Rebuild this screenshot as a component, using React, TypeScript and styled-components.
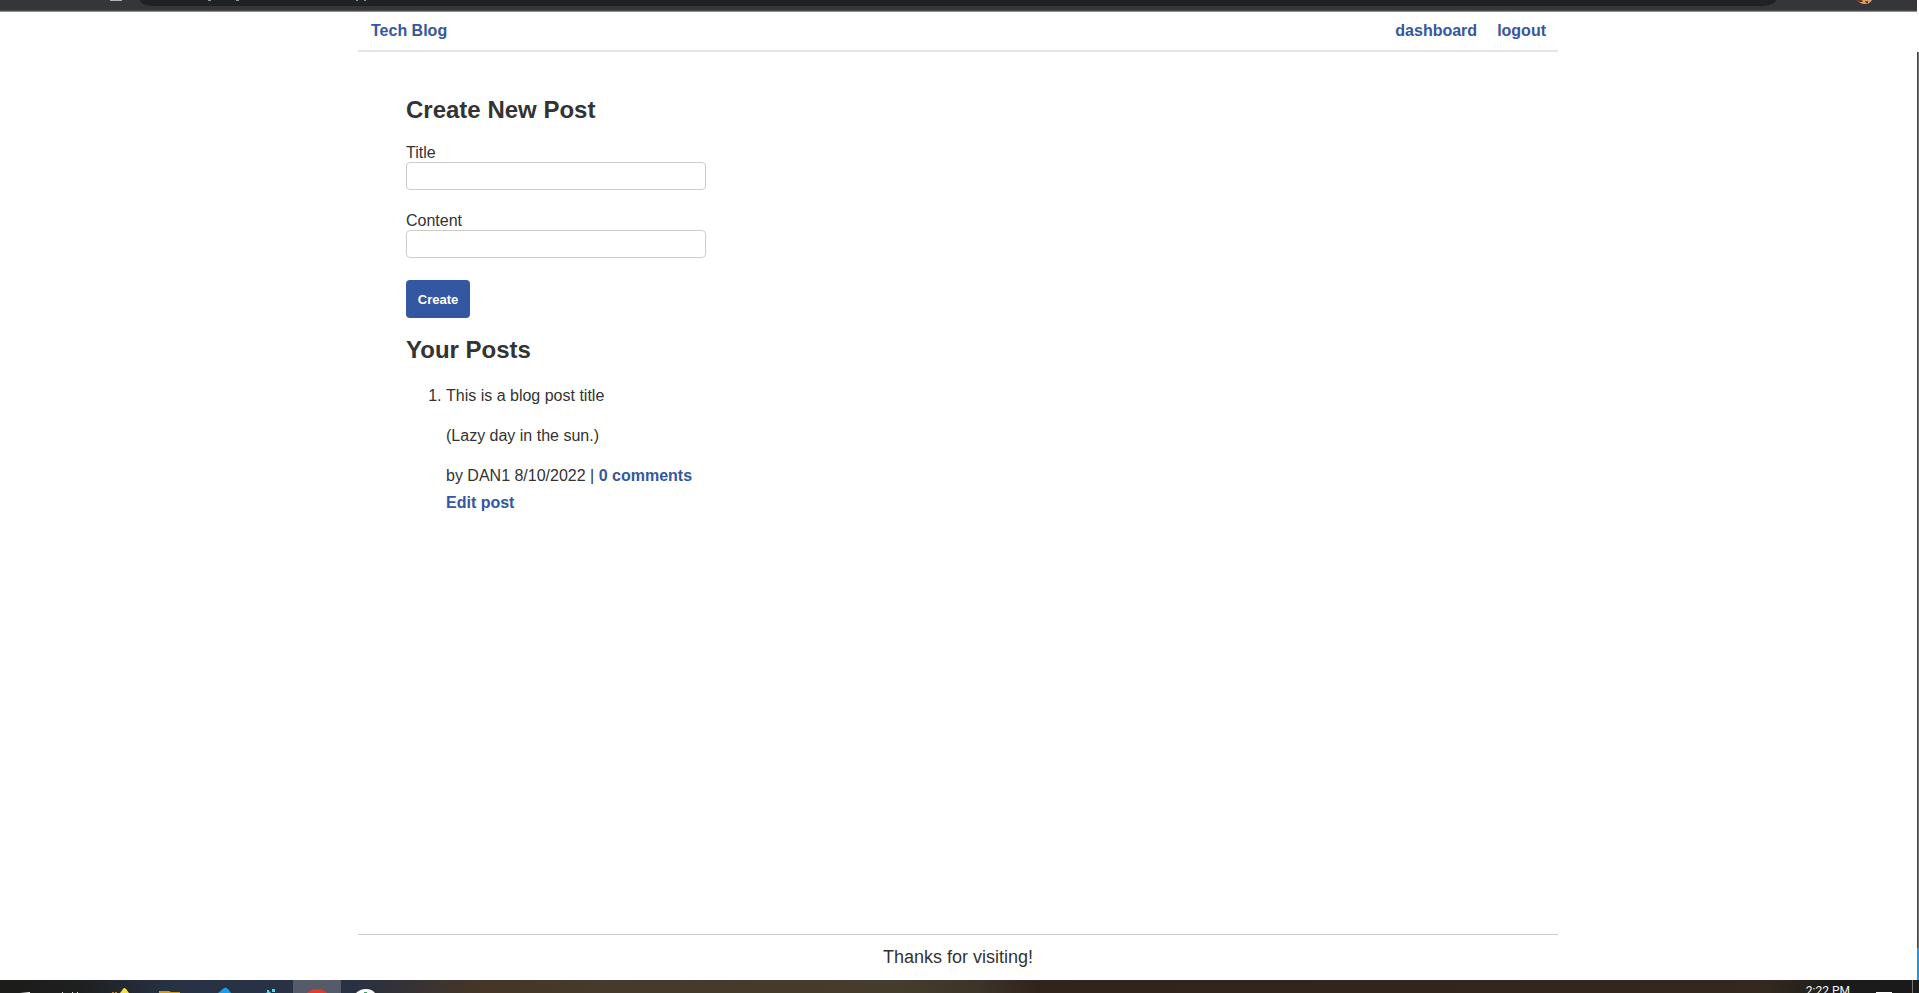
import React from 'react';
import styled, { createGlobalStyle } from 'styled-components';

const GlobalStyle = createGlobalStyle`
  * { box-sizing: border-box; }
  body {
    margin: 0;
    background: #fff;
    color: #333;
    font: 16px/18px "Liberation Sans", Arial, sans-serif;
  }
`;

const Screen = styled.div`
  display: flex;
  flex-direction: column;
  height: 100vh;
  overflow: hidden;
`;

const BrowserBar = styled.div`
  flex: none;
  height: 12px;
  padding: 0 141px 0 140px;
  margin-right: 2px;
  background: #35363a;
  border-bottom: 1px solid #8c8a8b;
  box-shadow: inset 0 -1px #4b484b;
  position: relative;
`;

const AddressBar = styled.div`
  height: 6px;
  background: #202124;
  border-radius: 0 0 14px 14px / 0 0 6px 6px;
`;

const BarDetails = styled.svg<{ $side: 'left' | 'right' }>`
  position: absolute;
  top: 0;
  ${(p) => (p.$side === 'left' ? 'left: 0;' : 'right: 0;')}
`;

const Viewport = styled.div`
  flex: 1;
  display: flex;
  min-height: 0;
`;

const Page = styled.div`
  flex: 1;
  display: flex;
  flex-direction: column;
  width: 100%;
  max-width: 1200px;
  margin: 0 auto;
`;

const ScrollEdge = styled.div`
  flex: none;
  width: 3px;
  padding: 40px 0 0 1px;
  display: flex;
  flex-direction: column;
`;

const EdgeThumb = styled.div`
  flex: 1;
  background: #777;
  border-left: 1px solid #444;
`;

const EdgeAccent = styled.div`
  height: 32px;
  background: #2196e3;
`;

const Header = styled.header`
  display: flex;
  justify-content: space-between;
  padding: 10px 12px 10px 13px;
  border-bottom: 2px solid #e4e4e4;
`;

const Nav = styled.nav`
  display: flex;
  gap: 20px;
`;

const Link = styled.a`
  color: #3457a2;
  font-weight: bold;
  text-decoration: none;
`;

const Main = styled.main`
  flex: 1;
  padding: 44px 48px 0;
`;

const Heading = styled.h2`
  margin: 0 0 20px;
  font-size: 24px;
  line-height: 28px;
`;

const Form = styled.form`
  margin-bottom: 18px;
`;

const Field = styled.div`
  display: flex;
  flex-direction: column;
  width: 300px;
  margin-bottom: 22px;
`;

const TextInput = styled.input`
  height: 28px;
  padding: 4px;
  border: 1px solid #ccc;
  border-radius: 4px;
  font: inherit;
`;

const SubmitButton = styled.button`
  display: block;
  height: 38px;
  width: 64px;
  padding: 0;
  border: 0;
  border-radius: 4px;
  background: #3457a2;
  color: #fff;
  font: bold 13px "Liberation Sans", Arial, sans-serif;
`;

const PostList = styled.ol`
  margin: 23px 0 0;
  padding-left: 40px;
`;

const PostText = styled.p`
  margin: 0 0 22px;
`;

const PostMeta = styled.div`
  margin-bottom: 9px;
`;

const Footer = styled.footer`
  padding: 11px 0;
  border-top: 1px solid #ccc;
  font-size: 18px;
  line-height: 23px;
  text-align: center;
`;

const Taskbar = styled.div`
  flex: none;
  display: flex;
  justify-content: space-between;
  height: 13px;
  overflow: hidden;
  background: linear-gradient(90deg, #1c1c1a 0, #1e1f1f 4%, #273244 9%, #273244 18%, #30313a 20%, #453626 25%, #453a2b 31%, #443c2c 47%, #3c3428 51%, #31241c 54%, #33261d 83%, #33291f 92%, #1b1b1b 96%, #1a1a1a);
`;

const Tray = styled.div`
  display: flex;
`;

const Clock = styled.span`
  margin: 2px 26px 0 0;
  color: #f2f2f2;
  font: 12px/18px Roboto, "Noto Sans", sans-serif;
`;

export default function App() {
  return (
    <Screen>
      <GlobalStyle />
      <BrowserBar>
        <AddressBar />
        <BarDetails $side="left" width="380" height="4">
          <path d="M110 0h12v1h-12z" fill="#aeb0b4" />
          <path d="M208 0h3v1h-3zM236 0h3v1h-3zM356 0h2v1h-2zM364 0h2v1h-2z" fill="#8f969a" />
        </BarDetails>
        <BarDetails $side="right" width="64" height="5">
          <path d="M4 0h15q-2 4-7 4t-8-4z" fill="#d5a468" />
          <path d="M4 0h5l1 2h-4zM12 1h3v2h-2z" fill="#7a3020" />
        </BarDetails>
      </BrowserBar>
      <Viewport>
        <Page>
          <Header>
            <Link href="#home">Tech Blog</Link>
            <Nav>
              <Link href="#dashboard">dashboard</Link>
              <Link href="#logout">logout</Link>
            </Nav>
          </Header>
          <Main>
            <Heading>Create New Post</Heading>
            <Form onSubmit={(e) => e.preventDefault()}>
              <Field>
                <label htmlFor="title">Title</label>
                <TextInput id="title" type="text" />
              </Field>
              <Field>
                <label htmlFor="content">Content</label>
                <TextInput id="content" type="text" />
              </Field>
              <SubmitButton type="submit">Create</SubmitButton>
            </Form>
            <Heading>Your Posts</Heading>
            <PostList>
              <li>
                <PostText>This is a blog post title</PostText>
                <PostText>(Lazy day in the sun.)</PostText>
                <PostMeta>
                  by DAN1 8/10/2022 | <Link href="#comments">0 comments</Link>
                </PostMeta>
                <Link href="#edit">Edit post</Link>
              </li>
            </PostList>
          </Main>
          <Footer>Thanks for visiting!</Footer>
        </Page>
        <ScrollEdge>
          <EdgeThumb />
          <EdgeAccent />
        </ScrollEdge>
      </Viewport>
      <Taskbar>
        <svg width="400" height="13" aria-hidden="true">
          <path d="M293 0h48v13h-48z" fill="#555b68" />
          <path d="M20 13l10-1v1z" fill="#fff" />
          <path d="M62 12h1v1h-1zM72 12h1v1h-1zM77 12h1v1h-1z" fill="#ddd" />
          <path d="M112 12h2v1h-2zM115 12h2v1h-2z" fill="#c78218" />
          <path d="M120 13l3-4q1-2 3 0l3 4z" fill="#f7de4b" />
          <path d="M159 11h10l2 1h9v1h-21z" fill="#d99b0c" />
          <path d="M218 13l6-5q2-1 4 1l3 4z" fill="#1e9be4" />
          <path d="M266 13l3-2 2 2zM267 10h2v2h-2zM272 9h3v3h-3z" fill="#54d5ea" />
          <path d="M307 13q4-4 10-4t10 4z" fill="#e33b2e" />
          <path d="M356 13q4-4 10-4t9 4z" fill="#fff" />
          <path d="M364 12h3v1h-3z" fill="#35a853" />
        </svg>
        <Tray>
          <Clock>2:22 PM</Clock>
          <svg width="43" height="13" aria-hidden="true">
            <path d="M0 12h16v1h-16z" fill="#fff" />
            <path d="M36 0h1v13h-1z" fill="#777" />
          </svg>
        </Tray>
      </Taskbar>
    </Screen>
  );
}
